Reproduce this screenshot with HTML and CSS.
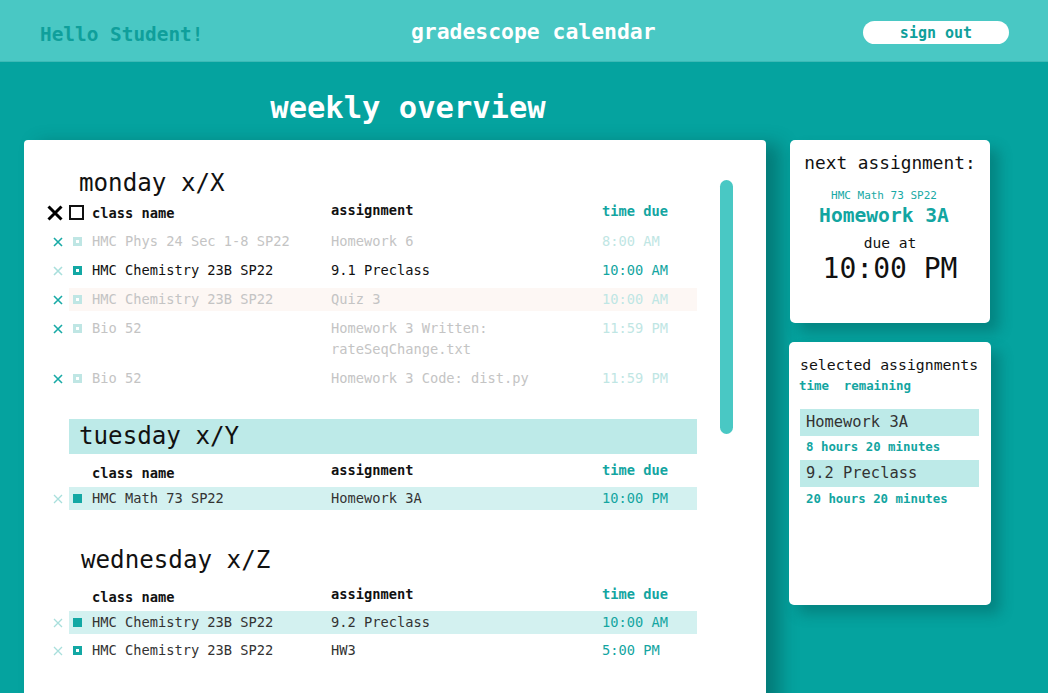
FILE: index.html
```html
<!DOCTYPE html>
<html lang="en">
  <head>
    <meta charset="UTF-8" />
    <meta name="viewport" content="width=device-width, initial-scale=1.0" />
    <title>gradescope calendar</title>
    <link rel="stylesheet" href="styles.css">
  </head>
  <body>
    <header class="topbar">
      <div class="hello">Hello Student!</div>
      <div class="brand">gradescope calendar</div>
      <button class="signout">sign out</button>
    </header>

    <main class="main">
      <section class="week">
        <h1 class="week-title">weekly overview</h1>
        <div class="week-card">
          <div class="week-list">

            <div class="day day-first">
              <h2 class="day-title">monday x/X</h2>
              <div class="col-head">
                <span class="x x-big">
                  <svg width="16" height="16" viewBox="0 0 16 16"><path d="M1.5 1.5L14.5 14.5M14.5 1.5L1.5 14.5" stroke="#000" stroke-width="3" fill="none"/></svg>
                </span>
                <div class="row-body">
                  <span class="box box-big"></span>
                  <span class="cls">class name</span>
                  <span class="asg">assignment</span>
                  <span class="due">time due</span>
                </div>
              </div>
              <div class="rows">
                <div class="row done">
                  <span class="x"><svg width="10" height="10" viewBox="0 0 10 10"><path d="M1 1L9 9M9 1L1 9" stroke="currentColor" stroke-width="1.6" fill="none"/></svg></span>
                  <div class="row-body">
                    <span class="box"></span>
                    <span class="cls">HMC Phys 24 Sec 1-8 SP22</span>
                    <span class="asg">Homework 6</span>
                    <span class="due">8:00 AM</span>
                  </div>
                </div>
                <div class="row active">
                  <span class="x x-faint"><svg width="10" height="10" viewBox="0 0 10 10"><path d="M1 1L9 9M9 1L1 9" stroke="currentColor" stroke-width="1.6" fill="none"/></svg></span>
                  <div class="row-body">
                    <span class="box"></span>
                    <span class="cls">HMC Chemistry 23B SP22</span>
                    <span class="asg">9.1 Preclass</span>
                    <span class="due">10:00 AM</span>
                  </div>
                </div>
                <div class="row done">
                  <span class="x"><svg width="10" height="10" viewBox="0 0 10 10"><path d="M1 1L9 9M9 1L1 9" stroke="currentColor" stroke-width="1.6" fill="none"/></svg></span>
                  <div class="row-body peach">
                    <span class="box"></span>
                    <span class="cls">HMC Chemistry 23B SP22</span>
                    <span class="asg">Quiz 3</span>
                    <span class="due">10:00 AM</span>
                  </div>
                </div>
                <div class="row done">
                  <span class="x"><svg width="10" height="10" viewBox="0 0 10 10"><path d="M1 1L9 9M9 1L1 9" stroke="currentColor" stroke-width="1.6" fill="none"/></svg></span>
                  <div class="row-body">
                    <span class="box"></span>
                    <span class="cls">Bio 52</span>
                    <span class="asg">Homework 3 Written: rateSeqChange.txt</span>
                    <span class="due">11:59 PM</span>
                  </div>
                </div>
                <div class="row done">
                  <span class="x"><svg width="10" height="10" viewBox="0 0 10 10"><path d="M1 1L9 9M9 1L1 9" stroke="currentColor" stroke-width="1.6" fill="none"/></svg></span>
                  <div class="row-body">
                    <span class="box"></span>
                    <span class="cls">Bio 52</span>
                    <span class="asg">Homework 3 Code: dist.py</span>
                    <span class="due">11:59 PM</span>
                  </div>
                </div>
              </div>
            </div>

            <div class="day">
              <h2 class="day-title day-band">tuesday x/Y</h2>
              <div class="col-head">
                <span class="x"></span>
                <div class="row-body">
                  <span class="box-space"></span>
                  <span class="cls">class name</span>
                  <span class="asg">assignment</span>
                  <span class="due">time due</span>
                </div>
              </div>
              <div class="rows">
                <div class="row picked">
                  <span class="x x-faint"><svg width="10" height="10" viewBox="0 0 10 10"><path d="M1 1L9 9M9 1L1 9" stroke="currentColor" stroke-width="1.3" fill="none"/></svg></span>
                  <div class="row-body mint">
                    <span class="box box-fill"></span>
                    <span class="cls">HMC Math 73 SP22</span>
                    <span class="asg">Homework 3A</span>
                    <span class="due">10:00 PM</span>
                  </div>
                </div>
              </div>
            </div>

            <div class="day day-late">
              <h2 class="day-title day-wide">wednesday x/Z</h2>
              <div class="col-head">
                <span class="x"></span>
                <div class="row-body">
                  <span class="box-space"></span>
                  <span class="cls">class name</span>
                  <span class="asg">assignment</span>
                  <span class="due">time due</span>
                </div>
              </div>
              <div class="rows">
                <div class="row picked">
                  <span class="x x-faint"><svg width="10" height="10" viewBox="0 0 10 10"><path d="M1 1L9 9M9 1L1 9" stroke="currentColor" stroke-width="1.3" fill="none"/></svg></span>
                  <div class="row-body mint">
                    <span class="box box-fill"></span>
                    <span class="cls">HMC Chemistry 23B SP22</span>
                    <span class="asg">9.2 Preclass</span>
                    <span class="due">10:00 AM</span>
                  </div>
                </div>
                <div class="row picked">
                  <span class="x x-faint"><svg width="10" height="10" viewBox="0 0 10 10"><path d="M1 1L9 9M9 1L1 9" stroke="currentColor" stroke-width="1.3" fill="none"/></svg></span>
                  <div class="row-body">
                    <span class="box"></span>
                    <span class="cls">HMC Chemistry 23B SP22</span>
                    <span class="asg">HW3</span>
                    <span class="due">5:00 PM</span>
                  </div>
                </div>
              </div>
            </div>

          </div>
          <div class="scrollbar"></div>
        </div>
      </section>

      <aside class="side">
        <div class="side-card next">
          <div class="next-label">next assignment:</div>
          <div class="next-class">HMC Math 73 SP22</div>
          <div class="next-name">Homework 3A</div>
          <div class="next-due">due at</div>
          <div class="next-time">10:00 PM</div>
        </div>
        <div class="side-card selected">
          <div class="sel-label">selected assignments</div>
          <div class="sel-sub">time&nbsp;&nbsp;remaining</div>
          <div class="sel-item">Homework 3A</div>
          <div class="sel-left">8 hours 20 minutes</div>
          <div class="sel-item">9.2 Preclass</div>
          <div class="sel-left">20 hours 20 minutes</div>
        </div>
      </aside>
    </main>
  </body>
</html>
```

FILE: styles.css
```css
body {
  margin: 0;
  padding: 0;
  height: 693px;
  overflow: hidden;
  background-color: #05a39f;
  font-family: "DejaVu Sans Mono", "Liberation Mono", monospace;
  color: #111;
}
.topbar {
  height: 61px;
  display: flex;
  align-items: center;
  justify-content: space-between;
  padding: 0 39px 0 40px;
  background-color: #49c8c4;
  border-bottom: 1px solid #3dbab6;
}
.hello {
  font-size: 19.4px;
  font-weight: bold;
  color: #0f9f9b;
  margin-top: 7px;
}
.brand {
  font-size: 21.4px;
  font-weight: bold;
  color: #fff;
  margin-top: 2px;
}
.signout {
  width: 146px;
  height: 23px;
  border: none;
  border-radius: 12px;
  background-color: #fff;
  color: #0f9f9b;
  font-family: inherit;
  font-size: 15px;
  font-weight: bold;
  padding: 0;
  margin-top: 4px;
}

.main {
  display: flex;
  gap: 24px;
  padding: 0 24px;
}
.week {
  width: 742px;
}
.week-title {
  margin: 26px 0 12px 26px;
  height: 40px;
  line-height: 40px;
  text-align: center;
  font-size: 30.5px;
  font-weight: bold;
  color: #fff;
}
.week-card {
  display: flex;
  height: 580px;
  background-color: #fff;
  border-radius: 4px;
  padding: 26px 0 0 23px;
  box-sizing: border-box;
  box-shadow: 14px 4px 18px rgba(0, 50, 48, 0.35);
}
.week-list {
  width: 650px;
}
.scrollbar {
  width: 13px;
  height: 254px;
  margin: 14px 0 0 23px;
  border-radius: 7px;
  background-color: #49c8c4;
}

.day {
  margin-top: 29px;
}
.day-first {
  margin-top: 0;
}
.day-late {
  margin-top: 33px;
}
.day-title {
  margin: 0 0 0 22px;
  height: 35px;
  line-height: 35px;
  padding-left: 10px;
  font-size: 24.2px;
  font-weight: normal;
  color: #111;
}
.day-band {
  background-color: #bdeae8;
}
.day-wide {
  padding-left: 12px;
}
.col-head {
  display: flex;
  margin-top: 7px;
  line-height: 22px;
  font-weight: bold;
  font-size: 13.7px;
}
.day-first .col-head {
  margin-top: 0;
}
.col-head .due {
  color: #13a5a1;
}
.col-head .asg,
.col-head .due {
  position: relative;
  top: -3px;
}
.day-first .col-head .due {
  top: -2px;
}
.rows {
  display: flex;
  flex-direction: column;
  gap: 5px;
  margin-top: 2px;
  font-size: 13.7px;
}
.day-first .rows {
  gap: 6px;
  margin-top: 5px;
}
.row {
  display: flex;
  line-height: 21px;
}
.x {
  width: 22px;
  height: 23px;
  flex-shrink: 0;
  display: flex;
  align-items: center;
  justify-content: center;
  color: #18aaa6;
}
.x-big {
  justify-content: flex-start;
}
.x-faint {
  color: #a9dfdc;
}
.row-body {
  flex: 1;
  display: grid;
  grid-template-columns: 23px 239px 271px 1fr;
  align-items: start;
  padding: 1px 0;
}
.peach {
  background-color: #fdf7f4;
}
.mint {
  background-color: #d3f1f0;
}
.box {
  width: 3px;
  height: 3px;
  margin: 6px 0 0 4px;
  border: 3px solid #13a8a4;
  background-color: #fff;
}
.box-big {
  width: 11px;
  height: 11px;
  margin: 3px 0 0 0;
  border: 2px solid #111;
}
.box-fill {
  width: 9px;
  height: 9px;
  border: none;
  background-color: #13a8a4;
}
.box-space {
  width: 1px;
}
.cls,
.asg {
  padding-right: 10px;
}
.row .due {
  color: #13a5a1;
}
.done .cls,
.done .asg {
  color: #c4c4c4;
}
.done .due {
  color: #bfe6e4;
}
.done .box {
  border-color: #bfe6e4;
}
.picked .cls,
.picked .asg {
  color: #333;
}

.side {
  width: 200px;
  margin-top: 78px;
  display: flex;
  flex-direction: column;
  gap: 19px;
}
.side-card {
  background-color: #fff;
  border-radius: 5px;
  box-shadow: 9px 9px 14px rgba(0, 60, 58, 0.3);
}
.next {
  height: 183px;
  box-sizing: border-box;
  padding-top: 11px;
  text-align: center;
}
.next-label {
  font-size: 17.8px;
  line-height: 24px;
}
.next-class {
  margin-top: 14px;
  font-size: 11px;
  line-height: 14px;
  color: #18a9a5;
  padding-right: 12px;
}
.next-name {
  margin-top: 1px;
  font-size: 19.6px;
  font-weight: bold;
  line-height: 24px;
  color: #13a5a1;
  padding-right: 12px;
}
.next-due {
  margin-top: 6px;
  font-size: 14.6px;
  line-height: 18px;
}
.next-time {
  margin-top: 1px;
  font-size: 28px;
  line-height: 32px;
}
.selected {
  height: 263px;
  width: 202px;
  margin-left: -1px;
  box-sizing: border-box;
  padding: 13px 12px 0 11px;
}
.sel-label {
  font-size: 14.8px;
  line-height: 20px;
}
.sel-sub {
  margin-top: 3px;
  font-size: 12.4px;
  font-weight: bold;
  line-height: 16px;
  color: #13a5a1;
  margin-left: -1px;
}
.sel-item {
  margin-top: 15px;
  height: 27px;
  line-height: 27px;
  padding-left: 6px;
  font-size: 15.4px;
  color: #333;
  background-color: #bdeae8;
}
.sel-left {
  margin: 3px 0 0 6px;
  font-size: 12.4px;
  font-weight: bold;
  line-height: 16px;
  color: #13a5a1;
}
.sel-left + .sel-item {
  margin-top: 5px;
}
.sel-left + .sel-item + .sel-left {
  margin-top: 4px;
}
```
